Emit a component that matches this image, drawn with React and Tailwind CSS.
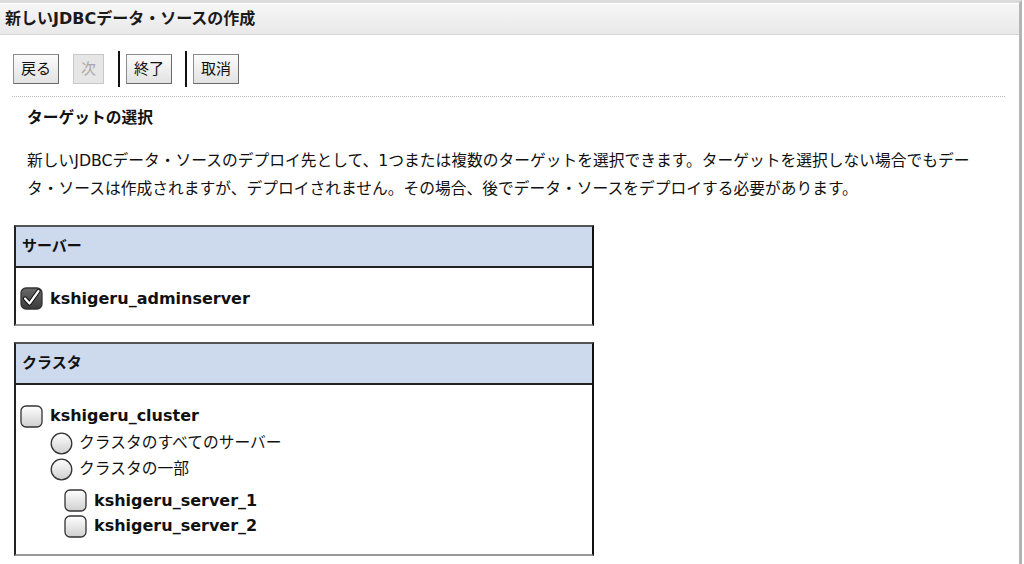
import React from "react";

const FONT = { fontFamily: '"DejaVu Sans", "Noto Sans CJK JP", sans-serif' };

function Checkbox({ checked }) {
  return (
    <svg width="23" height="23" viewBox="0 0 23 23" className="shrink-0 overflow-visible">
      <defs>
        <linearGradient id="cbOff" x1="0" y1="0" x2="0" y2="1">
          <stop offset="0" stopColor="#ffffff" />
          <stop offset="1" stopColor="#cfcfcf" />
        </linearGradient>
        <linearGradient id="cbOn" x1="0" y1="0" x2="0" y2="1">
          <stop offset="0" stopColor="#6a6a6a" />
          <stop offset="1" stopColor="#3a3a3a" />
        </linearGradient>
      </defs>
      <rect x="1" y="1" width="21" height="21" rx="5" fill={checked ? "url(#cbOn)" : "url(#cbOff)"} stroke="#333" strokeWidth="1.3" />
      {checked && (
        <>
          <path d="M5 11.5 L9.5 16.5 L18.5 4" fill="none" stroke="#111" strokeWidth="4.2" strokeLinecap="round" strokeLinejoin="round" />
          <path d="M5 11.5 L9.5 16.5 L18.5 4" fill="none" stroke="#fff" strokeWidth="2.2" strokeLinecap="round" strokeLinejoin="round" />
        </>
      )}
    </svg>
  );
}

function Radio() {
  return (
    <svg width="23" height="23" viewBox="0 0 23 23" className="shrink-0">
      <defs>
        <linearGradient id="rdOff" x1="0" y1="0" x2="0" y2="1">
          <stop offset="0" stopColor="#ffffff" />
          <stop offset="1" stopColor="#cfcfcf" />
        </linearGradient>
      </defs>
      <circle cx="11.5" cy="11.5" r="10.3" fill="url(#rdOff)" stroke="#333" strokeWidth="1.3" />
    </svg>
  );
}

function Btn({ children, disabled, narrow }) {
  return (
    <div
      className={
        "h-[30px] flex items-center justify-center text-[15px] border " +
        (narrow ? "w-[31px] " : "w-[46px] ") +
        (disabled
          ? "border-[#c8c8c8] bg-[#e6e6e6] text-[#a8a8a8]"
          : "border-[#8c8c8c] border-b-[#6a6a6a] border-r-[#6a6a6a] bg-gradient-to-b from-[#fbfbfb] to-[#e2e2e2] text-[#111]")
      }
    >
      {children}
    </div>
  );
}

function Sep() {
  return <div className="w-[2px] h-[36px] bg-[#111]" />;
}

function Panel({ title, children }) {
  return (
    <div className="w-[580px] border-2 border-t-[#555] border-l-[#222] border-r-[#111] border-b-[#999]">
      <div className="h-[41px] bg-[#cddaee] border-b-2 border-[#222] flex items-center pl-[6px] text-[15px] font-bold text-[#111]">
        {title}
      </div>
      {children}
    </div>
  );
}

export default function App() {
  return (
    <div className="w-[1024px] h-[564px] bg-white overflow-hidden" style={FONT}>
      <div className="w-[1022px] h-[564px] border-t-[3px] border-t-[#dcdcdc] border-r-[3px] border-r-[#b4b4b4] flex flex-col">
        <div className="h-[32px] shrink-0 border-t border-t-white border-b border-b-[#d6d6d6] bg-gradient-to-b from-[#f6f6f6] to-[#e9e9e9] flex items-center pl-[5px] text-[16px] font-semibold text-[#1a1a1a]">
          新しいJDBCデータ・ソースの作成
        </div>
        <div className="flex items-center pl-[13px] mt-[16px] h-[36px]">
          <Btn>戻る</Btn>
          <div className="w-[14px]" />
          <Btn disabled narrow>次</Btn>
          <div className="w-[14px]" />
          <Sep />
          <div className="w-[6px]" />
          <Btn>終了</Btn>
          <div className="w-[13px]" />
          <Sep />
          <div className="w-[6px]" />
          <Btn>取消</Btn>
        </div>
        <div className="ml-[12px] w-[993px] mt-[9px] border-t border-dotted border-[#bcbcbc]" />
        <div className="pl-[27px] pt-[9px] text-[15.75px] font-bold text-[#111]">ターゲットの選択</div>
        <div className="pl-[27px] pt-[17px] w-[1010px] text-[15.75px] leading-[28px] text-[#111]">
          新しいJDBCデータ・ソースのデプロイ先として、1つまたは複数のターゲットを選択できます。ターゲットを選択しない場合でもデー
          <br />
          タ・ソースは作成されますが、デプロイされません。その場合、後でデータ・ソースをデプロイする必要があります。
        </div>
        <div className="pl-[14px] pt-[22px] flex flex-col gap-[16px]">
          <Panel title="サーバー">
            <div className="h-[56px] flex items-center pt-[6px] pl-[4px] gap-[7px] text-[16px] font-bold text-[#111]">
              <Checkbox checked />
              <span>kshigeru_adminserver</span>
            </div>
          </Panel>
          <Panel title="クラスタ">
            <div className="pt-[18px] pb-[15px] pl-[4px] flex flex-col text-[#111]">
              <div className="flex items-center gap-[7px] h-[27px] text-[16px] font-bold">
                <Checkbox />
                <span>kshigeru_cluster</span>
              </div>
              <div className="flex items-center gap-[6px] h-[27px] pl-[30px] text-[15.75px]">
                <Radio />
                <span>クラスタのすべてのサーバー</span>
              </div>
              <div className="flex items-center gap-[6px] h-[25px] pl-[30px] text-[15.75px]">
                <Radio />
                <span>クラスタの一部</span>
              </div>
              <div className="flex items-center gap-[7px] h-[32px] pt-[6px] pl-[44px] text-[16px] font-bold">
                <Checkbox />
                <span>kshigeru_server_1</span>
              </div>
              <div className="flex items-center gap-[7px] h-[25px] pl-[44px] text-[16px] font-bold">
                <Checkbox />
                <span>kshigeru_server_2</span>
              </div>
            </div>
          </Panel>
        </div>
      </div>
    </div>
  );
}
